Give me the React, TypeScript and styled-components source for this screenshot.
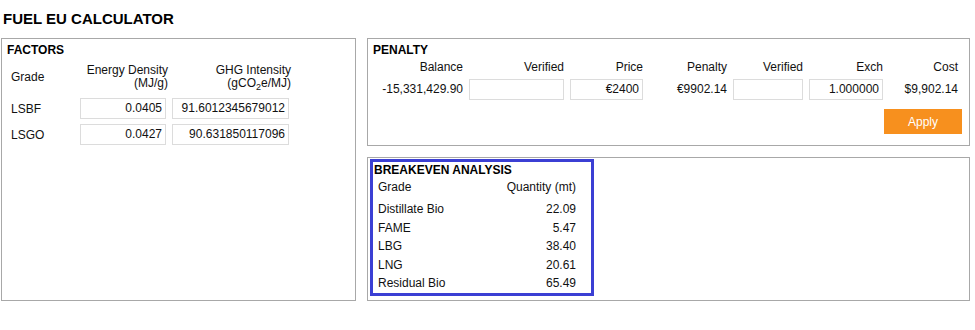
import React from 'react'
import styled, { createGlobalStyle } from 'styled-components'

const GlobalStyle = createGlobalStyle`
  body {
    margin: 0;
    background: #fff;
    font-family: "Liberation Sans", Arial, sans-serif;
    font-size: 12px;
    color: #111;
  }
`;

const Page = styled.div`
  width: 975px;
  height: 330px;
  padding: 10px 0 0 1px;
  box-sizing: border-box;
`;

const Title = styled.h1`
  margin: 0 0 11px 2px;
  font-size: 15px;
  line-height: 17px;
  font-weight: bold;
  color: #000;
`;

const Layout = styled.div`
  display: grid;
  grid-template-columns: 355px 603px;
  grid-template-rows: 108px 144px;
  column-gap: 11px;
  row-gap: 11px;
`;

const Panel = styled.section<{ $span?: number }>`
  border: 1px solid #a8a8a8;
  box-sizing: border-box;
  grid-row: span ${p => p.$span || 1};
`;

const PanelTitle = styled.div`
  font-weight: bold;
  font-size: 12px;
  line-height: 14px;
  color: #000;
`;

const Input = styled.div<{ $w: number }>`
  width: ${p => p.$w}px;
  height: 21px;
  border: 1px solid #dcdcdc;
  box-sizing: border-box;
  text-align: right;
  padding-right: 3px;
  line-height: 19px;
  white-space: nowrap;
`;

/* factors */
const FactorsBody = styled.div`
  padding: 4px 0 0 5px;
`;

const FactorsGrid = styled.div`
  display: grid;
  grid-template-columns: 63px 86px 117px;
  column-gap: 6px;
  row-gap: 5px;
  margin-top: 7px;
  padding-left: 4px;
  align-items: center;
`;

const HeadCell = styled.div<{ $right?: boolean }>`
  text-align: ${p => (p.$right ? 'right' : 'left')};
  line-height: 13px;
  margin-bottom: 3px;
  margin-right: ${p => (p.$right ? '-2px' : '0')};
`;

const FactorRow = styled.div`
  display: contents;
`;

const GradeCell = styled.div`
  line-height: 20px;
`;

const Sub = styled.sub`
  font-size: 9px;
  line-height: 0;
`;

/* penalty */
const PenaltyBody = styled.div`
  padding: 4px 9px 0 5px;
  display: flex;
  flex-direction: column;
`;

const PenaltyGrid = styled.div`
  display: grid;
  grid-template-columns: 90px 95px 73px 78px 70px 74px 69px;
  column-gap: 6px;
  row-gap: 5px;
  align-items: center;
  margin-top: 3px;
`;

const NumHead = styled.div`
  text-align: right;
  line-height: 14px;
`;

const NumCell = styled.div<{ $nudge?: number }>`
  text-align: right;
  line-height: 14px;
  margin-top: ${p => p.$nudge || 0}px;
  white-space: nowrap;
`;

const ApplyRow = styled.div`
  display: flex;
  justify-content: flex-end;
  margin-top: 9px;
  margin-right: -2px;
`;

const ApplyButton = styled.button`
  width: 78px;
  height: 25px;
  border: none;
  background: #f7901e;
  color: #fff;
  font-family: inherit;
  font-size: 12px;
  padding: 0;
`;

/* breakeven */
const BreakevenOuter = styled.div`
  padding: 1px 0 0 2px;
`;

const BlueBox = styled.div`
  width: 224px;
  height: 137px;
  border: 3px solid #3b3fd4;
  box-sizing: border-box;
  padding: 1px 0 0 1px;
`;

const BreakevenTable = styled.div`
  display: grid;
  grid-template-columns: 100px 98px;
  padding-left: 4px;
  margin-top: 3px;
`;

const BeHead = styled.div<{ $right?: boolean }>`
  text-align: ${p => (p.$right ? 'right' : 'left')};
  line-height: 14px;
  padding-bottom: 6px;
`;

const BeCell = styled.div<{ $right?: boolean }>`
  text-align: ${p => (p.$right ? 'right' : 'left')};
  line-height: 18.5px;
`;

const factors = [
  { grade: 'LSBF', density: '0.0405', ghg: '91.6012345679012' },
  { grade: 'LSGO', density: '0.0427', ghg: '90.631850117096' },
];

const breakeven = [
  ['Distillate Bio', '22.09'],
  ['FAME', '5.47'],
  ['LBG', '38.40'],
  ['LNG', '20.61'],
  ['Residual Bio', '65.49'],
];

function App() {
  return (
    <>
      <GlobalStyle />
      <Page>
        <Title>FUEL EU CALCULATOR</Title>
        <Layout>
          <Panel $span={2}>
            <FactorsBody>
              <PanelTitle>FACTORS</PanelTitle>
              <FactorsGrid>
                <FactorRow>
                  <HeadCell>Grade</HeadCell>
                  <HeadCell $right>Energy Density<br />(MJ/g)</HeadCell>
                  <HeadCell $right>GHG Intensity<br />(gCO<Sub>2</Sub>e/MJ)</HeadCell>
                </FactorRow>
                {factors.map(f => (
                  <FactorRow key={f.grade}>
                    <GradeCell>{f.grade}</GradeCell>
                    <Input $w={86}>{f.density}</Input>
                    <Input $w={117}>{f.ghg}</Input>
                  </FactorRow>
                ))}
              </FactorsGrid>
            </FactorsBody>
          </Panel>

          <Panel>
            <PenaltyBody>
              <PanelTitle>PENALTY</PanelTitle>
              <PenaltyGrid>
                <NumHead>Balance</NumHead>
                <NumHead>Verified</NumHead>
                <NumHead>Price</NumHead>
                <NumHead>Penalty</NumHead>
                <NumHead>Verified</NumHead>
                <NumHead>Exch</NumHead>
                <NumHead>Cost</NumHead>

                <NumCell $nudge={-1}>-15,331,429.90</NumCell>
                <Input $w={95}></Input>
                <Input $w={73}>€2400</Input>
                <NumCell $nudge={-2}>€9902.14</NumCell>
                <Input $w={70}></Input>
                <Input $w={74}>1.000000</Input>
                <NumCell $nudge={-2}>$9,902.14</NumCell>
              </PenaltyGrid>
              <ApplyRow>
                <ApplyButton>Apply</ApplyButton>
              </ApplyRow>
            </PenaltyBody>
          </Panel>

          <Panel>
            <BreakevenOuter>
              <BlueBox>
                <PanelTitle>BREAKEVEN ANALYSIS</PanelTitle>
                <BreakevenTable>
                  <BeHead>Grade</BeHead>
                  <BeHead $right>Quantity (mt)</BeHead>
                  {breakeven.map(([grade, qty]) => (
                    <React.Fragment key={grade}>
                      <BeCell>{grade}</BeCell>
                      <BeCell $right>{qty}</BeCell>
                    </React.Fragment>
                  ))}
                </BreakevenTable>
              </BlueBox>
            </BreakevenOuter>
          </Panel>
        </Layout>
      </Page>
    </>
  );
}

export default App;
